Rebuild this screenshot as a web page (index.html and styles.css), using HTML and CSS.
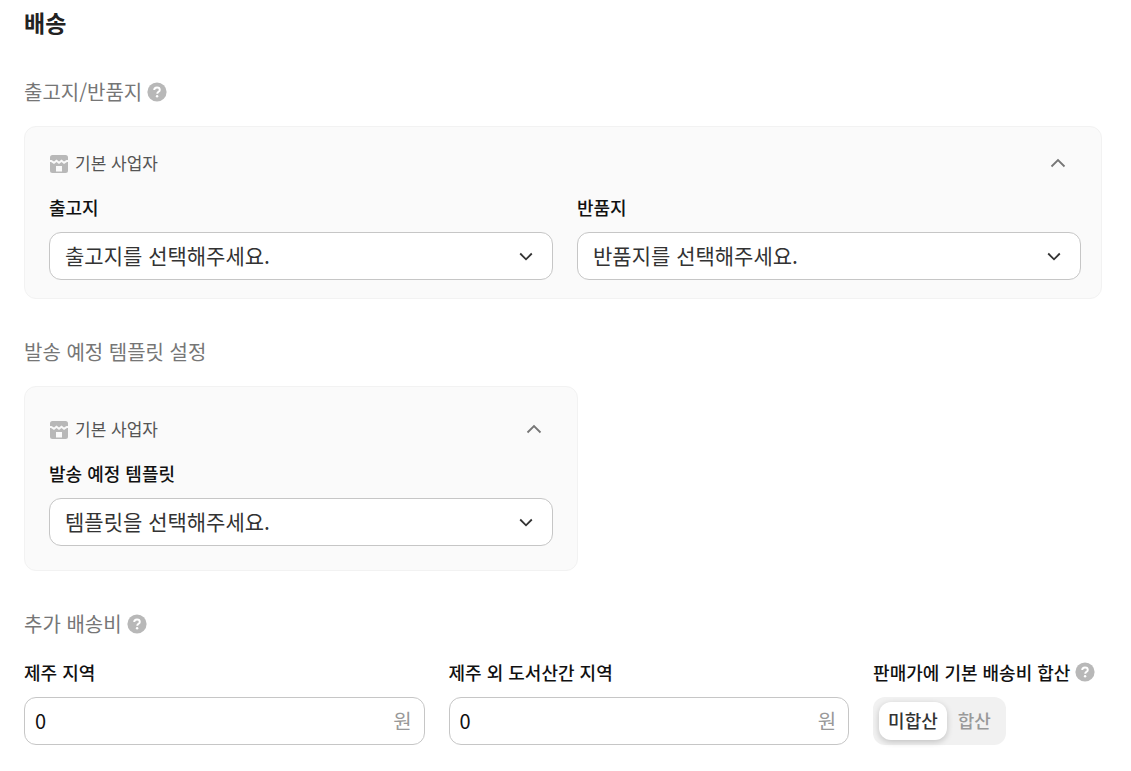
FILE: index.html
```html
<!DOCTYPE html>
<html lang="ko">
<head>
  <meta charset="utf-8">
  <meta name="viewport" content="width=device-width, initial-scale=1">
  <title>배송</title>
  <link rel="stylesheet" href="styles.css">
</head>
<body>
  <svg class="sprite" aria-hidden="true">
    <symbol id="icon-help" viewBox="0 0 20 20">
      <circle cx="10" cy="10" r="9.6" fill="#b8b8b8"/>
      <path d="M7.2 8.1C7.2 6.5 8.4 5.5 10 5.5s2.800 1 2.800 2.400c0 1.900-2.600 2-2.600 3.900" fill="none" stroke="#fff" stroke-width="1.900"/>
      <circle cx="10.1" cy="14.200" r="1.200" fill="#fff"/>
    </symbol>
    <symbol id="icon-store" viewBox="0 0 18 18">
      <path d="M2.5 0h13A2.500 2.500 0 0 1 18 2.500V5h-1.500L14 6.500 11.500 4.500 9 6.500 6.500 4.500 4 6.500 1.500 5H0V2.500A2.500 2.500 0 0 1 2.500 0Z" fill="#b8b8b8"/>
      <path d="M0 7h1L4 9 6.500 7 9 9 11.500 7 14 9 17 7h1V15.500A2.500 2.500 0 0 1 15.500 18h-13A2.500 2.500 0 0 1 0 15.500ZM6 11v5.500h6V11Z" fill="#b8b8b8" fill-rule="evenodd"/>
    </symbol>
    <symbol id="icon-up" viewBox="0 0 16 10">
      <path d="M1.500 8.500 8 2l6.500 6.500" fill="none" stroke="#767676" stroke-width="1.800"/>
    </symbol>
    <symbol id="icon-down" viewBox="0 0 14 10">
      <path d="M1.200 2.500 7 8.300 12.800 2.500" fill="none" stroke="#333" stroke-width="1.800"/>
    </symbol>
  </svg>

  <main class="page">
    <h1 class="title">배송</h1>

    <section class="section">
      <h2 class="heading">출고지/반품지
        <button class="help" type="button" aria-label="출고지/반품지 도움말"><svg><use href="#icon-help"/></svg></button>
      </h2>
      <div class="card card-wide">
        <div class="card-head">
          <svg class="store"><use href="#icon-store"/></svg>
          <span class="owner">기본 사업자</span>
          <button class="fold" type="button" aria-label="접기" aria-expanded="true"><svg><use href="#icon-up"/></svg></button>
        </div>
        <div class="pair">
          <div class="field">
            <label class="label" for="origin">출고지</label>
            <div class="select">
              <select class="control" id="origin"><option>출고지를 선택해주세요.</option></select>
              <svg class="arrow"><use href="#icon-down"/></svg>
            </div>
          </div>
          <div class="field">
            <label class="label" for="returns">반품지</label>
            <div class="select">
              <select class="control" id="returns"><option>반품지를 선택해주세요.</option></select>
              <svg class="arrow"><use href="#icon-down"/></svg>
            </div>
          </div>
        </div>
      </div>
    </section>

    <section class="section">
      <h2 class="heading">발송 예정 템플릿 설정</h2>
      <div class="card card-half">
        <div class="card-head">
          <svg class="store"><use href="#icon-store"/></svg>
          <span class="owner">기본 사업자</span>
          <button class="fold" type="button" aria-label="접기" aria-expanded="true"><svg><use href="#icon-up"/></svg></button>
        </div>
        <div class="field">
          <label class="label" for="template">발송 예정 템플릿</label>
          <div class="select">
            <select class="control" id="template"><option>템플릿을 선택해주세요.</option></select>
            <svg class="arrow"><use href="#icon-down"/></svg>
          </div>
        </div>
      </div>
    </section>

    <section class="section">
      <h2 class="heading">추가 배송비
        <button class="help" type="button" aria-label="추가 배송비 도움말"><svg><use href="#icon-help"/></svg></button>
      </h2>
      <div class="fees">
        <div class="field">
          <label class="label" for="jeju">제주 지역</label>
          <div class="control amount">
            <input class="amount-input" id="jeju" type="text" inputmode="numeric" value="0">
            <span class="unit">원</span>
          </div>
        </div>
        <div class="field">
          <label class="label" for="island">제주 외 도서산간 지역</label>
          <div class="control amount">
            <input class="amount-input" id="island" type="text" inputmode="numeric" value="0">
            <span class="unit">원</span>
          </div>
        </div>
        <div class="field" role="radiogroup" aria-labelledby="sum-label">
          <div class="label label-help">
            <span id="sum-label">판매가에 기본 배송비 합산</span>
            <button class="help" type="button" aria-label="배송비 합산 도움말"><svg><use href="#icon-help"/></svg></button>
          </div>
          <div class="toggle">
            <label class="choice"><input class="choice-input" type="radio" name="sum" checked>미합산</label>
            <label class="choice"><input class="choice-input" type="radio" name="sum">합산</label>
          </div>
        </div>
      </div>
    </section>
  </main>
</body>
</html>
```
FILE: styles.css
```css
* {
  box-sizing: border-box;
}

body {
  margin: 0;
  background: #fff;
  color: #111;
  font-family: "Noto Sans CJK KR", sans-serif;
  font-size: 18px;
}

button,
input,
select {
  font: inherit;
  color: inherit;
}

svg {
  display: block;
  flex: none;
}

.sprite {
  position: absolute;
  width: 0;
  height: 0;
}

.page {
  padding: 6px 29px 24px 24px;
}

.title {
  margin: 0;
  color: #222;
  font-size: 23px;
  font-weight: 700;
  line-height: 33px;
}

.section {
  margin-top: 38px;
}

.heading {
  display: flex;
  align-items: center;
  gap: 5px;
  margin: 0;
  color: #767676;
  font-size: 20px;
  font-weight: 400;
  line-height: 30px;
}

.help,
.fold {
  padding: 0;
  border: 0;
  background: none;
  cursor: pointer;
}

.help svg {
  width: 20px;
  height: 20px;
}

.card {
  margin-top: 19px;
  border: 1px solid #f2f2f2;
  border-radius: 12px;
  background: #fafafa;
}

.card-wide {
  padding: 18px 20px 18px 24px;
}

.card-half {
  max-width: 554px;
  padding: 24px;
}

.card-head {
  display: flex;
  align-items: center;
  gap: 7px;
  height: 38px;
  margin-bottom: 11px;
  padding: 0 7px 0 1px;
  color: #555;
  font-size: 17px;
}

.owner {
  padding-bottom: 4px;
}

.store {
  width: 18px;
  height: 18px;
}

.fold {
  margin-left: auto;
  padding: 4px 4px 6px;
}

.fold svg {
  width: 16px;
  height: 10px;
}

.card-wide .fold {
  margin-right: 4px;
}

.pair {
  display: grid;
  grid-template-columns: 1fr 1fr;
  gap: 24px;
}

.label {
  display: block;
  margin-bottom: 12px;
  font-weight: 500;
  line-height: 26px;
  white-space: nowrap;
}

.label-help {
  display: flex;
  align-items: center;
  gap: 5px;
}

.control {
  width: 100%;
  height: 48px;
  border: 1px solid #c6c6c6;
  border-radius: 12px;
  background: #fff;
}

.select {
  display: grid;
  align-items: center;
}

.select > * {
  grid-area: 1 / 1;
}

.select .control {
  padding: 0 48px 2px 15px;
  color: #333;
  font-size: 21px;
  appearance: none;
}

.arrow {
  justify-self: end;
  width: 14px;
  height: 10px;
  margin-right: 20px;
  pointer-events: none;
}

.fees {
  display: grid;
  grid-template-columns: 7fr 7fr 4fr;
  gap: 24px;
  margin-top: 20px;
}

.amount {
  display: flex;
  align-items: center;
  padding: 0 12px 2px 10px;
  font-size: 20px;
}

.amount-input {
  flex: 1;
  min-width: 0;
  padding: 0;
  border: 0;
  outline: 0;
  background: none;
  color: #111;
}

.unit {
  color: #999;
}

.toggle {
  display: inline-flex;
  gap: 2px;
  height: 48px;
  padding: 5px 6px;
  border-radius: 12px;
  background: #f1f1f1;
}

.choice {
  display: flex;
  align-items: center;
  padding: 0 9px 2px;
  border-radius: 12px;
  color: #999;
  font-weight: 500;
  cursor: pointer;
}

.choice:has(:checked) {
  background: #fff;
  box-shadow: 0 2px 6px rgba(0, 0, 0, 0.2);
  color: #333;
}

.choice-input {
  position: absolute;
  opacity: 0;
  pointer-events: none;
}
```
